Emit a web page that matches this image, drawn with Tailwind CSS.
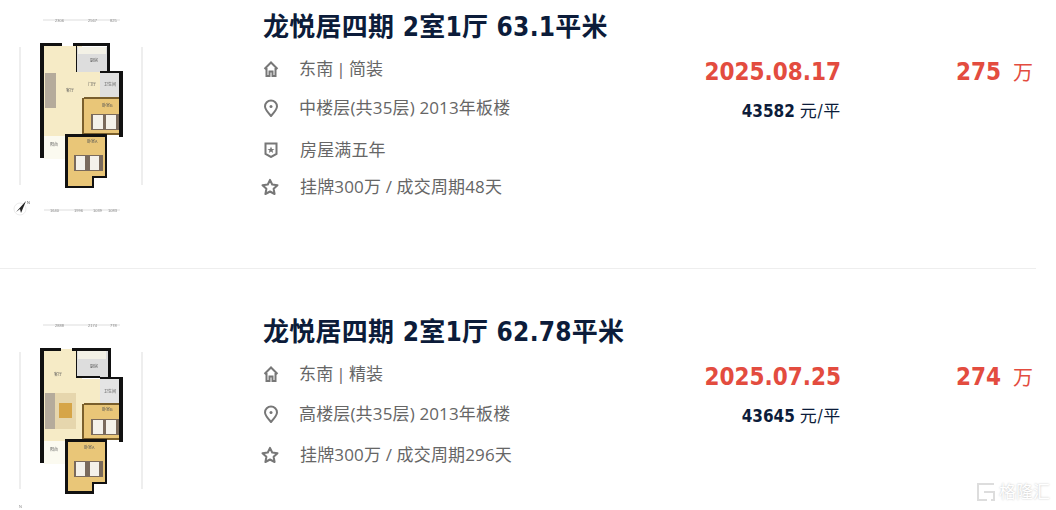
<!DOCTYPE html>
<html lang="zh-CN">

<head>
    <meta charset="UTF-8">
    <meta name="viewport" content="width=device-width, initial-scale=1.0">
    <title>成交房源</title>
    <script src="https://cdn.jsdelivr.net/npm/@tailwindcss/browser@4"></script>
</head>

<body class="bg-white relative h-[510px] overflow-hidden font-['DejaVu_Sans_Condensed','Noto_Sans_CJK_SC',sans-serif]">

    <ul class="w-[1036px]">
        <!-- first listing -->
        <li class="flex h-[269px] pt-[10px] border-b border-[#eeeeee]">
            <div class="w-[263px] shrink-0 -mt-[10px]">
                <svg class="w-[150px] h-[230px] blur-[0.6px]" viewBox="0 0 150 230">
                    <g stroke="#bbb" stroke-width="0.5">
                        <path d="M43 20H120M20 47V185M142 47V185M44 210H120" />
                    </g>
                    <g fill="#888" font-size="4" font-family="Liberation Sans">
                        <text x="55" y="22">2306</text><text x="88" y="22">2567</text><text x="110" y="22">825</text>
                        <text x="50" y="212">1640</text><text x="74" y="212">1996</text><text x="93" y="212">1039</text><text x="108" y="212">1083</text>
                    </g>
                    <rect x="44" y="46" width="38" height="90" fill="#f6ebc6" />
                    <rect x="80" y="72" width="20" height="26" fill="#f6ebc6" />
                    <rect x="76" y="47" width="32" height="25" fill="#dddddd" />
                    <rect x="78" y="47" width="28" height="7" fill="#f3f1e6" />
                    <rect x="100" y="73" width="19" height="25" fill="#dfdfdf" />
                    <rect x="83" y="98" width="36" height="36" fill="#e9c678" />
                    <rect x="91" y="114" width="28" height="16" fill="#7a6a5c" />
                    <rect x="93" y="115" width="10" height="14" fill="#f4f1ea" />
                    <rect x="106" y="115" width="10" height="14" fill="#f4f1ea" />
                    <rect x="45" y="73" width="11" height="35" fill="#b5ab9b" />
                    <rect x="68" y="137" width="37" height="49" fill="#e9c678" />
                    <rect x="94" y="178" width="14" height="10" fill="#ffffff" />
                    <rect x="74" y="155" width="29" height="16" fill="#7a6a5c" />
                    <rect x="76" y="156" width="9" height="14" fill="#f4f1ea" />
                    <rect x="90" y="156" width="9" height="14" fill="#f4f1ea" />
                    <rect x="44" y="136" width="21" height="23" fill="#fbfaf0" />
                    <path fill="#7a5f2c" d="M82 98H84V134H82ZM84 97H119V99H84ZM83 133H119V135H83Z" />
                    <path fill="#111" d="M40 43H62V46H44V158H40ZM73 43H110V72H107V46H73ZM76 46H77V72H76ZM100 71H123V137H119V73H100ZM65 134H107V178H94V188H65ZM68 137V186H92V176H105V137Z" />
                    <g fill="#555" font-size="4" font-family="Noto Sans CJK SC">
                        <text x="90" y="62">厨房</text><text x="104" y="86">卫生间</text><text x="66" y="92">客厅</text>
                        <text x="102" y="107">卧室B</text><text x="50" y="146">阳台</text><text x="87" y="143">卧室A</text><text x="88" y="86">门厅</text>
                    </g>
                    <circle cx="20" cy="209" r="6" fill="#fff" stroke="#ddd" stroke-width="0.6" />
                    <path d="M26 201L16 212L20 209L21 213Z" fill="#222" />
                    <text x="27" y="204" font-size="4" fill="#555" font-family="Liberation Sans">N</text>
                </svg>
            </div>
            <div class="w-[410px] shrink-0">
                <h3 class="text-[26px] leading-[34px] font-bold text-[#0c1c3a] tracking-[0.25px]">龙悦居四期 2室1厅 63.1平米</h3>
                <div class="mt-[9px] flex flex-col text-[#666666] text-[17px] leading-[24px] font-['Open_Sans','Noto_Sans_CJK_SC',sans-serif] tracking-[0.15px]">
                    <p class="flex items-center h-[32px] -mb-[1px] [word-spacing:-1.5px]">
                        <svg class="w-4 h-4 mr-[20px] shrink-0" viewBox="0 0 16 16" fill="none" stroke="#777" stroke-width="2"><path d="M1.5 8L8 1.5L14.500 8M3.500 7V15H6.500V10.500H9.500V15H12.500V7" /></svg>东南 | 简装
                    </p>
                    <p class="flex items-center h-[32px] mt-[8px]">
                        <svg class="w-4 h-[18px] mr-[20px] shrink-0" viewBox="0 0 16 18" fill="none" stroke="#777" stroke-width="2"><path d="M8 17C4 12.500 2 10 2 7.500A6 6 0 0 1 14 7.500C14 10 12 12.500 8 17Z" /><circle cx="8" cy="7.500" r="1.500" fill="#777" stroke="none" /></svg>中楼层(共35层) 2013年板楼
                    </p>
                    <p class="flex items-center h-[32px] mt-[10px]">
                        <svg class="w-4 h-4 mr-[21px] shrink-0" viewBox="0 0 16 16" fill="none" stroke="#777" stroke-width="2"><path d="M2.500 1.500H13.500V12L8 15L2.500 12Z" /><path d="M8 4.500L9 7H11.500L9.500 8.500L10.200 11L8 9.500L5.800 11L6.500 8.500L4.500 7H7Z" fill="#777" stroke="none" /></svg>房屋满五年
                    </p>
                    <p class="flex items-center h-[32px] mt-[5px]">
                        <svg class="w-[18px] h-[18px] -ml-[2px] mr-[21px] shrink-0" viewBox="0 0 18 18" fill="none" stroke="#777" stroke-width="2" stroke-linejoin="round"><path d="M9 1.800L11.200 6.500L16.500 7.200L12.600 10.800L13.600 16L9 13.500L4.400 16L5.400 10.800L1.500 7.200L6.800 6.500Z" /></svg>挂牌300万 / 成交周期48天
                    </p>
                </div>
            </div>
            <div class="w-[168px] shrink-0 text-right mt-[45px]">
                <p class="text-[24px] leading-[34px] font-bold text-[#e34c3f]">2025.08.17</p>
                <p class="mt-[11px] text-[17px] leading-[22px] text-[#0c1c3a]"><span class="font-bold">43582</span> <span class="tracking-[0.7px]">元/平</span></p>
            </div>
            <div class="w-[192px] shrink-0 text-right mt-[45px] text-[#e34c3f]">
                <p class="leading-[34px]"><span class="text-[24px] font-bold">275</span><span class="text-[20px] ml-[12px]">万</span></p>
            </div>
        </li>

        <!-- second listing -->
        <li class="flex pt-[46px]">
            <div class="w-[263px] shrink-0 -mt-[46px]">
                <svg class="w-[150px] h-[241px] blur-[0.6px]" viewBox="0 0 150 241">
                    <g stroke="#bbb" stroke-width="0.5">
                        <path d="M43 56H120M20 83V220M142 83V220" />
                    </g>
                    <g fill="#888" font-size="4" font-family="Liberation Sans">
                        <text x="55" y="58">2888</text><text x="88" y="58">2174</text><text x="110" y="58">778</text>
                        <text x="19" y="239">N</text>
                    </g>
                    <rect x="44" y="80" width="38" height="92" fill="#f6ebc6" />
                    <rect x="80" y="110" width="20" height="30" fill="#f6ebc6" />
                    <rect x="76" y="81" width="32" height="27" fill="#dddddd" />
                    <rect x="78" y="82" width="28" height="8" fill="#f3f1e6" />
                    <rect x="100" y="110" width="19" height="25" fill="#e4e4e4" />
                    <rect x="83" y="135" width="36" height="36" fill="#e9c678" />
                    <rect x="91" y="150" width="28" height="16" fill="#7a6a5c" />
                    <rect x="93" y="151" width="10" height="14" fill="#f4f1ea" />
                    <rect x="106" y="151" width="10" height="14" fill="#f4f1ea" />
                    <rect x="45" y="124" width="31" height="36" fill="#e6d6ad" />
                    <rect x="45" y="124" width="10" height="36" fill="#b5ab9b" />
                    <rect x="59" y="134" width="13" height="15" fill="#d6a548" />
                    <rect x="68" y="173" width="37" height="49" fill="#e9c678" />
                    <rect x="94" y="215" width="14" height="10" fill="#ffffff" />
                    <rect x="74" y="192" width="29" height="16" fill="#7a6a5c" />
                    <rect x="76" y="193" width="9" height="14" fill="#f4f1ea" />
                    <rect x="90" y="193" width="9" height="14" fill="#f4f1ea" />
                    <rect x="44" y="172" width="21" height="23" fill="#fbfaf0" />
                    <path fill="#7a5f2c" d="M82 135H84V170H82ZM84 134H119V136H84ZM83 169H119V171H83Z" />
                    <path fill="#111" d="M40 79H61V82H44V194H40ZM72 79H111V108H108V82H72ZM76 82H77V108H76ZM76 107H100V109H76ZM100 108H123V173H119V110H100ZM65 170H107V215H94V225H65ZM68 173V222H92V213H105V173Z" />
                    <g fill="#555" font-size="4" font-family="Noto Sans CJK SC">
                        <text x="90" y="99">厨房</text><text x="104" y="124">卫生间</text><text x="54" y="107">客厅</text>
                        <text x="102" y="142">卧室B</text><text x="50" y="182">阳台</text><text x="84" y="180">卧室A</text>
                    </g>
                </svg>
            </div>
            <div class="w-[410px] shrink-0">
                <h3 class="text-[26px] leading-[34px] font-bold text-[#0c1c3a] tracking-[0.25px]">龙悦居四期 2室1厅 62.78平米</h3>
                <div class="mt-[9px] flex flex-col text-[#666666] text-[17px] leading-[24px] font-['Open_Sans','Noto_Sans_CJK_SC',sans-serif] tracking-[0.15px]">
                    <p class="flex items-center h-[32px] -mb-[1px] [word-spacing:-1.5px]">
                        <svg class="w-4 h-4 mr-[20px] shrink-0" viewBox="0 0 16 16" fill="none" stroke="#777" stroke-width="2"><path d="M1.5 8L8 1.5L14.500 8M3.500 7V15H6.500V10.500H9.500V15H12.500V7" /></svg>东南 | 精装
                    </p>
                    <p class="flex items-center h-[32px] mt-[9px]">
                        <svg class="w-4 h-[18px] mr-[20px] shrink-0" viewBox="0 0 16 18" fill="none" stroke="#777" stroke-width="2"><path d="M8 17C4 12.500 2 10 2 7.500A6 6 0 0 1 14 7.500C14 10 12 12.500 8 17Z" /><circle cx="8" cy="7.500" r="1.500" fill="#777" stroke="none" /></svg>高楼层(共35层) 2013年板楼
                    </p>
                    <p class="flex items-center h-[32px] mt-[9px]">
                        <svg class="w-[18px] h-[18px] -ml-[2px] mr-[21px] shrink-0" viewBox="0 0 18 18" fill="none" stroke="#777" stroke-width="2" stroke-linejoin="round"><path d="M9 1.800L11.200 6.500L16.500 7.200L12.600 10.800L13.600 16L9 13.500L4.400 16L5.400 10.800L1.500 7.200L6.800 6.500Z" /></svg>挂牌300万 / 成交周期296天
                    </p>
                </div>
            </div>
            <div class="w-[168px] shrink-0 text-right mt-[45px]">
                <p class="text-[24px] leading-[34px] font-bold text-[#e34c3f]">2025.07.25</p>
                <p class="mt-[11px] text-[17px] leading-[22px] text-[#0c1c3a]"><span class="font-bold">43645</span> <span class="tracking-[0.7px]">元/平</span></p>
            </div>
            <div class="w-[192px] shrink-0 text-right mt-[45px] text-[#e34c3f]">
                <p class="leading-[34px]"><span class="text-[24px] font-bold">274</span><span class="text-[20px] ml-[12px]">万</span></p>
            </div>
        </li>
    </ul>

    <!-- watermark -->
    <div class="absolute right-[6px] bottom-[8px] flex items-center gap-[3px] text-[17px] leading-[20px] text-white [text-shadow:0_0_2px_#bbbbbb]">
        <svg class="w-5 h-5" viewBox="0 0 20 20" fill="none" stroke="#dddddd" stroke-width="2"><path d="M18 2H2V18H11M8 10H18V18H15" /></svg>
        <span>格隆汇</span>
    </div>

</body>

</html>
